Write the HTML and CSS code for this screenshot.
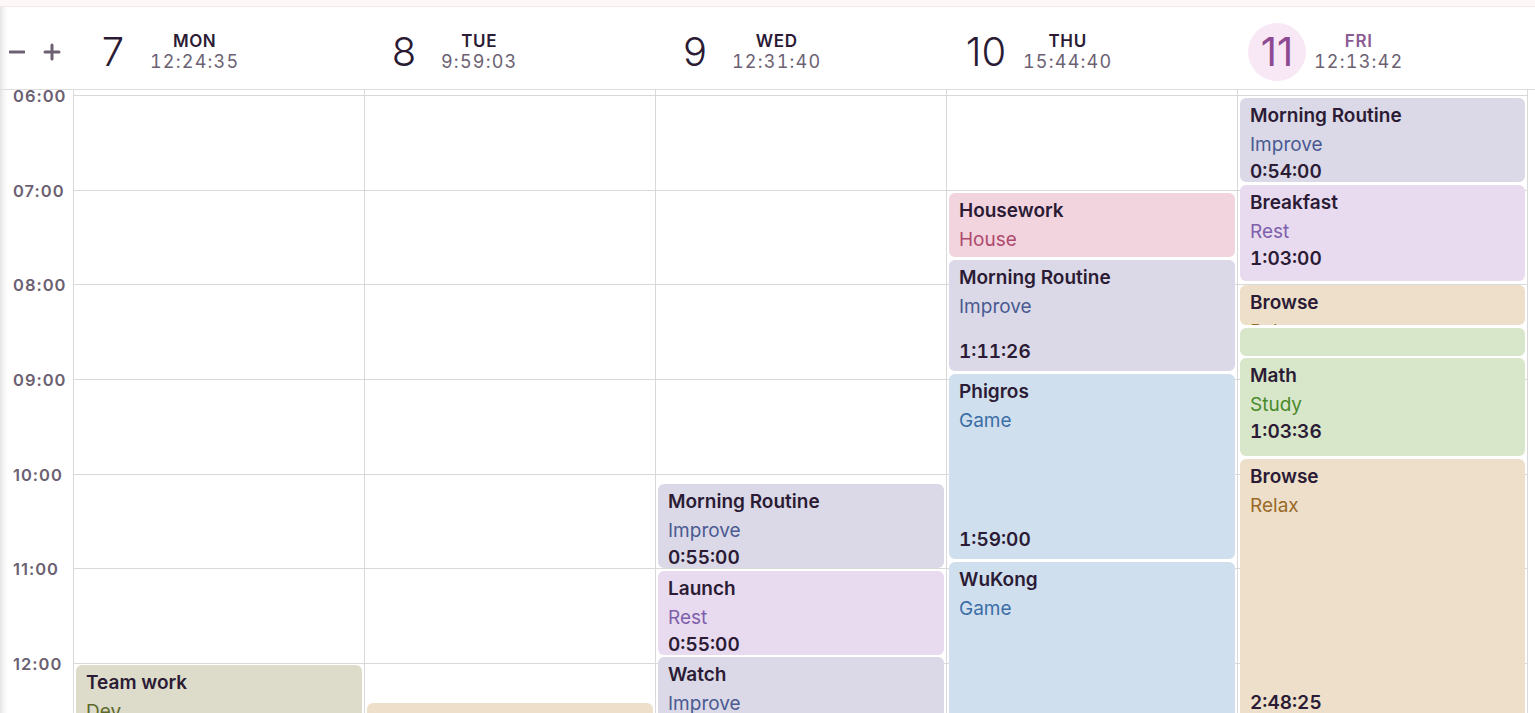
FILE: index.html
```html
<!DOCTYPE html>
<html lang="en">
<head>
<meta charset="utf-8">
<title>Week</title>
<link rel="stylesheet" href="styles.css">
</head>
<body>
<div class="topbar"></div>
<header class="head">
  <div class="zoom">
    <svg class="zbtn" width="16" height="16" viewBox="0 0 16 16"><path d="M1 8H15" stroke="#6b6172" stroke-width="3" stroke-linecap="round"/></svg>
    <svg class="zbtn" width="18" height="18" viewBox="0 0 18 18"><path d="M2 9H16M9 2V16" stroke="#6b6172" stroke-width="3" stroke-linecap="round"/></svg>
  </div>
  <div class="dhead"><span class="dnum">7</span><div class="dlab"><span class="dname">MON</span><span class="dtime">12:24:35</span></div></div>
  <div class="dhead"><span class="dnum">8</span><div class="dlab"><span class="dname">TUE</span><span class="dtime">9:59:03</span></div></div>
  <div class="dhead"><span class="dnum">9</span><div class="dlab"><span class="dname">WED</span><span class="dtime">12:31:40</span></div></div>
  <div class="dhead"><span class="dnum">10</span><div class="dlab"><span class="dname">THU</span><span class="dtime">15:44:40</span></div></div>
  <div class="dhead today"><span class="dnum">11</span><div class="dlab"><span class="dname">FRI</span><span class="dtime">12:13:42</span></div></div>
</header>
<main class="grid">
  <div class="times">
    <div class="tl">06:00</div>
    <div class="tl">07:00</div>
    <div class="tl">08:00</div>
    <div class="tl">09:00</div>
    <div class="tl">10:00</div>
    <div class="tl">11:00</div>
    <div class="tl">12:00</div>
  </div>

  <div class="day">
    <div class="hr"></div><div class="hr"></div><div class="hr"></div><div class="hr"></div><div class="hr"></div><div class="hr"></div><div class="hr"></div>
    <div class="ev dev" style="top:575px;height:120px"><span class="t">Team work</span><span class="c">Dev</span><span class="d">1:20:00</span></div>
  </div>

  <div class="day">
    <div class="hr"></div><div class="hr"></div><div class="hr"></div><div class="hr"></div><div class="hr"></div><div class="hr"></div><div class="hr"></div>
    <div class="ev relax" style="top:613px;height:100px"><span class="t">Browse</span><span class="c">Relax</span><span class="d">1:05:00</span></div>
  </div>

  <div class="day">
    <div class="hr"></div><div class="hr"></div><div class="hr"></div><div class="hr"></div><div class="hr"></div><div class="hr"></div><div class="hr"></div>
    <div class="ev improve" style="top:394px;height:84px"><span class="t">Morning Routine</span><span class="c">Improve</span><span class="d">0:55:00</span></div>
    <div class="ev rest" style="top:481px;height:84px"><span class="t">Launch</span><span class="c">Rest</span><span class="d">0:55:00</span></div>
    <div class="ev improve" style="top:567px;height:110px"><span class="t">Watch</span><span class="c">Improve</span><span class="d">1:10:00</span></div>
  </div>

  <div class="day">
    <div class="hr"></div><div class="hr"></div><div class="hr"></div><div class="hr"></div><div class="hr"></div><div class="hr"></div><div class="hr"></div>
    <div class="ev house" style="top:103px;height:64px"><span class="t">Housework</span><span class="c">House</span><span class="d">0:42:00</span></div>
    <div class="ev improve tall" style="top:170px;height:111px"><span class="t">Morning Routine</span><span class="c">Improve</span><span class="d">1:11:26</span></div>
    <div class="ev game tall" style="top:284px;height:185px"><span class="t">Phigros</span><span class="c">Game</span><span class="d">1:59:00</span></div>
    <div class="ev game tall" style="top:472px;height:260px"><span class="t">WuKong</span><span class="c">Game</span><span class="d">2:45:00</span></div>
  </div>

  <div class="day last">
    <div class="hr"></div><div class="hr"></div><div class="hr"></div><div class="hr"></div><div class="hr"></div><div class="hr"></div><div class="hr"></div>
    <div class="ev improve" style="top:8px;height:84px"><span class="t">Morning Routine</span><span class="c">Improve</span><span class="d">0:54:00</span></div>
    <div class="ev rest" style="top:95px;height:96px"><span class="t">Breakfast</span><span class="c">Rest</span><span class="d">1:03:00</span></div>
    <div class="ev relax" style="top:195px;height:40px"><span class="t">Browse</span><span class="c">Relax</span><span class="d">0:27:00</span></div>
    <div class="ev study" style="top:238px;height:28px"></div>
    <div class="ev study" style="top:268px;height:98px"><span class="t">Math</span><span class="c">Study</span><span class="d">1:03:36</span></div>
    <div class="ev relax tall" style="top:369px;height:263px"><span class="t">Browse</span><span class="c">Relax</span><span class="d">2:48:25</span></div>
  </div>
</main>
</body>
</html>
```

FILE: styles.css
```css
* { box-sizing: border-box; }

html, body {
  margin: 0;
  height: 713px;
  overflow: hidden;
}

body {
  font-family: Inter, "Noto Sans", sans-serif;
  color: #2b1b35;
  background: linear-gradient(to right, #e4e4e4 0, #f6f6f6 4px, #ffffff 8px);
}

.topbar {
  height: 7px;
  background: #fdf7f7;
  border-bottom: 1px solid #f5eaea;
}

.head {
  display: grid;
  grid-template-columns: 73px repeat(5, 291px);
  height: 83px;
  padding-top: 8px;
  border-bottom: 1px solid #dedede;
}

.zoom {
  display: flex;
  align-items: center;
  gap: 18px;
  padding-left: 9px;
}

.zbtn { display: block; }

.dhead {
  display: flex;
  align-items: center;
  padding-left: 12px;
  gap: 9px;
}

.dnum {
  width: 56px;
  height: 56px;
  line-height: 56px;
  text-align: center;
  font-size: 40px;
  font-weight: 300;
  color: #2b1b35;
  border-radius: 50%;
}

.dlab {
  display: flex;
  flex-direction: column;
  align-items: center;
}

.dname {
  font-size: 17px;
  font-weight: 600;
  line-height: 20px;
  letter-spacing: 0.6px;
  color: #2b1b35;
}

.dtime {
  font-size: 18px;
  line-height: 22px;
  letter-spacing: 1.2px;
  color: #6b6172;
  font-variant-numeric: tabular-nums;
}

.today .dnum {
  width: 58px;
  height: 58px;
  line-height: 58px;
  margin-left: -1px;
  margin-right: -1px;
  background: #f8e8f6;
  color: #8d4a90;
  font-weight: 400;
}

.today .dname { color: #8b5b93; }

.grid {
  display: grid;
  grid-template-columns: 73px repeat(5, 291px);
}

.times {
  margin-top: -4px;
}

.tl {
  height: 94.67px;
  line-height: 20px;
  padding-left: 13px;
  font-size: 16.5px;
  font-weight: 600;
  letter-spacing: 1px;
  color: #6b6172;
}

.day {
  position: relative;
  border-left: 1px solid #d9d9d9;
  padding-top: 5px;
}

.day.last { border-right: 1px solid #d9d9d9; }

.hr {
  height: 94.67px;
  border-top: 1px solid #d9d9d9;
}

.ev {
  position: absolute;
  left: 2px;
  right: 2px;
  border-radius: 6px;
  padding: 6px 10px 7px;
  display: flex;
  flex-direction: column;
  overflow: hidden;
  font-size: 19px;
  line-height: 24px;
}

.ev .t { font-weight: 600; color: #2b1b35; }
.ev .c { margin-top: 5px; font-weight: 400; }
.ev .d {
  margin-top: 3px;
  font-weight: 600;
  color: #2b1b35;
  font-variant-numeric: tabular-nums;
}
.ev.tall .d { margin-top: auto; }

.improve { background: #dbd9e7; }
.improve .c { color: #4a5a91; }
.rest { background: #e9dbef; }
.rest .c { color: #7d5fab; }
.house { background: #f2d4df; }
.house .c { color: #ae4a6c; }
.game { background: #d0dfee; }
.game .c { color: #3b6ea6; }
.study { background: #d8e6c9; }
.study .c { color: #4a8a2c; }
.relax { background: #eedfca; }
.relax .c { color: #996a28; }
.dev { background: #dddbca; }
.dev .c { color: #5d6a2b; }
```
